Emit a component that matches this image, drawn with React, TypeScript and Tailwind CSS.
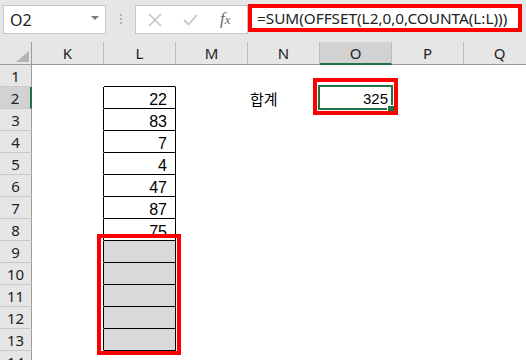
import React from "react";

const COLS = ["K", "L", "M", "N", "O", "P", "Q"];
const ROWS = [1, 2, 3, 4, 5, 6, 7, 8, 9, 10, 11, 12, 13, 14];
const L_VALUES: Record<number, string> = { 2: "22", 3: "83", 4: "7", 5: "4", 6: "47", 7: "87", 8: "75" };

function cellClass(col: string, row: number): string {
  const base = "h-[22px] border-r border-b border-transparent relative overflow-visible";
  if (col === "K" && row >= 2 && row <= 13) return base + " border-r-black";
  if (col === "L" && row === 1) return base + " border-b-black";
  if (col === "L" && row >= 2 && row <= 8) return base + " border-r-black border-b-black";
  if (col === "L" && row >= 9 && row <= 13) return base + " border-r-black border-b-black bg-[#d9d9d9]";
  return base;
}

function CellContent({ col, row }: { col: string; row: number }) {
  if (col === "L" && L_VALUES[row]) {
    return (
      <div className="text-right pr-[8px] pt-[3px] leading-[19px] text-[16px] text-black font-['Liberation_Sans',Arial,sans-serif]">
        {L_VALUES[row]}
      </div>
    );
  }
  if (col === "N" && row === 2) {
    return (
      <div className="pl-[2px] pt-[2px] leading-[19px] text-[15px] text-black whitespace-nowrap font-['Noto_Sans_CJK_KR',sans-serif]">
        합계
      </div>
    );
  }
  if (col === "O" && row === 2) {
    return (
      <div className="text-right pr-[3px] pt-[2px] leading-[19px] text-[15px] text-black font-['Liberation_Sans',Arial,sans-serif]">
        325
      </div>
    );
  }
  return null;
}

export default function App() {
  return (
    <div className="w-[526px] h-[360px] overflow-hidden bg-white relative font-['Noto_Sans','Noto_Sans_CJK_KR',sans-serif]">
      {/* Formula bar area */}
      <div className="h-[42px] bg-[#e6e6e6] flex items-start">
        <div className="ml-[3px] mt-[5px] w-[103px] h-[29px] bg-white border border-[#c6c6c6] flex items-center justify-between pl-[6px] pr-[6px]">
          <span className="text-[16px] leading-[20px] text-[#222]">O2</span>
          <svg width="8" height="5" viewBox="0 0 8 5" className="mb-[2px]">
            <polygon points="0,0 8,0 4,4" fill="#7a7a7a" />
          </svg>
        </div>
        <div className="w-[29px] mt-[14px] flex flex-col items-center gap-[2px]">
          <div className="w-[2px] h-[2px] bg-[#b3b3b3]" />
          <div className="w-[2px] h-[2px] bg-[#b3b3b3]" />
          <div className="w-[2px] h-[2px] bg-[#b3b3b3]" />
        </div>
        <div className="mt-[5px] w-[113px] h-[29px] bg-white border border-[#c6c6c6] flex items-center">
          <svg width="14" height="14" viewBox="0 0 14 14" className="ml-[12px]">
            <path d="M1 1 L13 13 M13 1 L1 13" stroke="#c4c4c4" strokeWidth="1.6" fill="none" />
          </svg>
          <svg width="15" height="12" viewBox="0 0 15 12" className="ml-[21px]">
            <path d="M1 6 L5.5 10.5 L14 1" stroke="#c4c4c4" strokeWidth="1.8" fill="none" />
          </svg>
          <span className="ml-[22px] text-[#6b6b6b] italic font-['Liberation_Serif',serif] text-[17px] leading-[20px]">
            f<span className="text-[13px]">x</span>
          </span>
        </div>
        <div className="mt-[4px] w-[274px] h-[28px] bg-white border-4 border-[#ff0000] flex items-center pl-[5px]">
          <span className="text-[15.3px] leading-[20px] text-[#222] whitespace-nowrap">=SUM(OFFSET(L2,0,0,COUNTA(L:L)))</span>
        </div>
      </div>

      {/* Grid */}
      <div className="grid grid-cols-[32px_repeat(7,72px)]">
        <div className="h-[23px] bg-[#e6e6e6] border-r border-b border-[#9b9b9b] flex items-end justify-end pr-[2px] pb-[2px]">
          <svg width="13" height="11" viewBox="0 0 13 11">
            <polygon points="13,0 13,11 0,11" fill="#b4b4b4" />
          </svg>
        </div>
        {COLS.map((c) =>
          c === "O" ? (
            <div
              key={c}
              className="h-[23px] bg-[#d2d2d2] border-r border-r-[#bcbcbc] border-b-2 border-b-[#217346] text-center text-[15px] leading-[22px] text-[#222]"
            >
              {c}
            </div>
          ) : (
            <div
              key={c}
              className="h-[23px] bg-[#e6e6e6] border-r border-r-[#bcbcbc] border-b border-b-[#9b9b9b] text-center text-[15px] leading-[22px] text-[#222]"
            >
              {c}
            </div>
          )
        )}
        {ROWS.map((r) => (
          <React.Fragment key={r}>
            {r === 2 ? (
              <div className="h-[22px] bg-[#d2d2d2] border-r-2 border-r-[#217346] border-b border-b-[#c8c8c8] text-center text-[15px] leading-[21px] pt-[1px] text-[#222]">
                {r}
              </div>
            ) : (
              <div className="h-[22px] bg-[#e6e6e6] border-r border-r-[#9b9b9b] border-b border-b-[#c8c8c8] text-center text-[15px] leading-[21px] pt-[1px] text-[#222]">
                {r}
              </div>
            )}
            {COLS.map((c) => (
              <div key={c} className={cellClass(c, r)}>
                <CellContent col={c} row={r} />
              </div>
            ))}
          </React.Fragment>
        ))}
      </div>

      {/* Selection of O2 */}
      <div className="absolute left-[318px] top-[85px] w-[75px] h-[25px] border-2 border-[#217346]" />
      <div className="absolute left-[387px] top-[105px] w-[8px] h-[8px] bg-[#217346] border border-white" />

      {/* Red annotation boxes */}
      <div className="absolute left-[313px] top-[78px] w-[85px] h-[37px] border-4 border-[#ff0000]" />
      <div className="absolute left-[97px] top-[234px] w-[84px] h-[121px] border-4 border-[#ff0000]" />
    </div>
  );
}
